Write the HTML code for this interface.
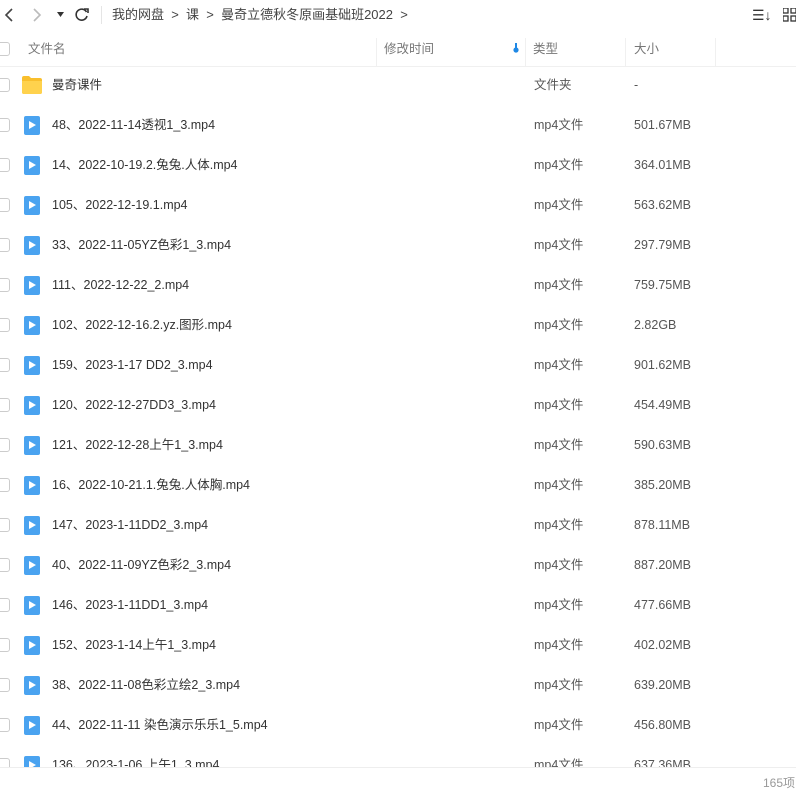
<!DOCTYPE html>
<html><head><meta charset="utf-8"><style>
*{margin:0;padding:0;box-sizing:border-box}
body{width:796px;height:794px;overflow:hidden;background:#fff;font-family:"Liberation Sans","Noto Sans CJK SC",sans-serif;font-size:12.5px;line-height:16px;color:#333;position:relative}
.a{position:absolute;white-space:nowrap}
.row{position:absolute;left:0;width:796px;height:40px}
.cb{position:absolute;left:-4px;top:13px;width:14px;height:14px;border:1px solid #ccc;border-radius:3px;background:#fff}
.ic{position:absolute;left:24px;top:11px;width:16px;height:19px;background:#4aa3f0;border-radius:2px}
.ic:after{content:"";position:absolute;left:5px;top:5px;border-left:7px solid #fff;border-top:4.5px solid transparent;border-bottom:4.5px solid transparent}
.nm,.tp,.sz{position:absolute;top:12px;height:16px;line-height:16px}
.nm{left:52px}
.tp{left:534px;color:#555}
.sz{left:634px;color:#555}
.hd{color:#777}
</style></head><body>
<svg class="a" style="left:2px;top:7px" width="14" height="16"><path d="M10 2L4 8l6 6" stroke="#444" stroke-width="1.6" fill="none"/></svg>
<svg class="a" style="left:30px;top:7px" width="14" height="16"><path d="M4 2l6 6-6 6" stroke="#bbb" stroke-width="1.6" fill="none"/></svg>
<svg class="a" style="left:57px;top:12px" width="8" height="6"><path d="M0 0h7L3.5 5z" fill="#333"/></svg>
<svg class="a" style="left:74px;top:7px" width="16" height="16"><path d="M12.5 5A5.5 5.5 0 1 0 13 9" stroke="#333" stroke-width="1.6" fill="none"/><path d="M10 2h4v4" stroke="#333" stroke-width="1.6" fill="none"/></svg>
<div class="a" style="left:101px;top:6px;width:1px;height:18px;background:#e5e5e5"></div>
<div class="a" style="left:112px;top:7px;font-size:13px;color:#444">我的网盘 &nbsp;&gt;&nbsp; 课 &nbsp;&gt;&nbsp; 曼奇立德秋冬原画基础班2022 &nbsp;&gt;</div>
<div class="a" style="left:752px;top:7px;font-size:14px;color:#333">☰↓</div>
<svg class="a" style="left:783px;top:8px" width="14" height="14"><rect x="0" y="0" width="5" height="5" fill="none" stroke="#333" stroke-width="1.3"/><rect x="8" y="0" width="5" height="5" fill="none" stroke="#333" stroke-width="1.3"/><rect x="0" y="8" width="5" height="5" fill="none" stroke="#333" stroke-width="1.3"/><rect x="8" y="8" width="5" height="5" fill="none" stroke="#333" stroke-width="1.3"/></svg>
<div class="a" style="left:0;top:31px;width:796px;height:36px;border-bottom:1px solid #f0f0f0"></div>
<div class="cb" style="top:42px"></div>
<div class="a hd" style="left:28px;top:41px">文件名</div>
<div class="a" style="left:376px;top:38px;width:1px;height:28px;background:#f0f0f0"></div>
<div class="a hd" style="left:384px;top:41px">修改时间</div>
<svg class="a" style="left:513px;top:43px" width="6" height="10"><rect x="2" y="0" width="2" height="5" fill="#1e88e5"/><circle cx="3" cy="7" r="2.6" fill="#1e88e5"/></svg>
<div class="a" style="left:525px;top:38px;width:1px;height:28px;background:#f0f0f0"></div>
<div class="a hd" style="left:533px;top:41px">类型</div>
<div class="a" style="left:625px;top:38px;width:1px;height:28px;background:#f0f0f0"></div>
<div class="a hd" style="left:634px;top:41px">大小</div>
<div class="a" style="left:715px;top:38px;width:1px;height:28px;background:#f0f0f0"></div>
<div class="row" style="top:65px"><div class="cb"></div>
<svg class="a" style="left:22px;top:11px" width="20" height="18"><path d="M0 2a2 2 0 0 1 2-2h5l2 2h9a2 2 0 0 1 2 2v12a2 2 0 0 1-2 2H2a2 2 0 0 1-2-2z" fill="#f9bf2d"/><path d="M0 5h20v11a2 2 0 0 1-2 2H2a2 2 0 0 1-2-2z" fill="#ffd24d"/></svg>
<div class="nm">曼奇课件</div><div class="tp">文件夹</div><div class="sz">-</div></div>
<div class="row" style="top:105px"><div class="cb"></div><div class="ic"></div><div class="nm">48、2022-11-14透视1_3.mp4</div><div class="tp">mp4文件</div><div class="sz">501.67MB</div></div>
<div class="row" style="top:145px"><div class="cb"></div><div class="ic"></div><div class="nm">14、2022-10-19.2.兔兔.人体.mp4</div><div class="tp">mp4文件</div><div class="sz">364.01MB</div></div>
<div class="row" style="top:185px"><div class="cb"></div><div class="ic"></div><div class="nm">105、2022-12-19.1.mp4</div><div class="tp">mp4文件</div><div class="sz">563.62MB</div></div>
<div class="row" style="top:225px"><div class="cb"></div><div class="ic"></div><div class="nm">33、2022-11-05YZ色彩1_3.mp4</div><div class="tp">mp4文件</div><div class="sz">297.79MB</div></div>
<div class="row" style="top:265px"><div class="cb"></div><div class="ic"></div><div class="nm">111、2022-12-22_2.mp4</div><div class="tp">mp4文件</div><div class="sz">759.75MB</div></div>
<div class="row" style="top:305px"><div class="cb"></div><div class="ic"></div><div class="nm">102、2022-12-16.2.yz.图形.mp4</div><div class="tp">mp4文件</div><div class="sz">2.82GB</div></div>
<div class="row" style="top:345px"><div class="cb"></div><div class="ic"></div><div class="nm">159、2023-1-17 DD2_3.mp4</div><div class="tp">mp4文件</div><div class="sz">901.62MB</div></div>
<div class="row" style="top:385px"><div class="cb"></div><div class="ic"></div><div class="nm">120、2022-12-27DD3_3.mp4</div><div class="tp">mp4文件</div><div class="sz">454.49MB</div></div>
<div class="row" style="top:425px"><div class="cb"></div><div class="ic"></div><div class="nm">121、2022-12-28上午1_3.mp4</div><div class="tp">mp4文件</div><div class="sz">590.63MB</div></div>
<div class="row" style="top:465px"><div class="cb"></div><div class="ic"></div><div class="nm">16、2022-10-21.1.兔兔.人体胸.mp4</div><div class="tp">mp4文件</div><div class="sz">385.20MB</div></div>
<div class="row" style="top:505px"><div class="cb"></div><div class="ic"></div><div class="nm">147、2023-1-11DD2_3.mp4</div><div class="tp">mp4文件</div><div class="sz">878.11MB</div></div>
<div class="row" style="top:545px"><div class="cb"></div><div class="ic"></div><div class="nm">40、2022-11-09YZ色彩2_3.mp4</div><div class="tp">mp4文件</div><div class="sz">887.20MB</div></div>
<div class="row" style="top:585px"><div class="cb"></div><div class="ic"></div><div class="nm">146、2023-1-11DD1_3.mp4</div><div class="tp">mp4文件</div><div class="sz">477.66MB</div></div>
<div class="row" style="top:625px"><div class="cb"></div><div class="ic"></div><div class="nm">152、2023-1-14上午1_3.mp4</div><div class="tp">mp4文件</div><div class="sz">402.02MB</div></div>
<div class="row" style="top:665px"><div class="cb"></div><div class="ic"></div><div class="nm">38、2022-11-08色彩立绘2_3.mp4</div><div class="tp">mp4文件</div><div class="sz">639.20MB</div></div>
<div class="row" style="top:705px"><div class="cb"></div><div class="ic"></div><div class="nm">44、2022-11-11 染色演示乐乐1_5.mp4</div><div class="tp">mp4文件</div><div class="sz">456.80MB</div></div>
<div class="row" style="top:745px"><div class="cb"></div><div class="ic"></div><div class="nm">136、2023-1-06 上午1_3.mp4</div><div class="tp">mp4文件</div><div class="sz">637.36MB</div></div>
<div class="a" style="left:0;top:767px;width:796px;height:27px;background:#fff;border-top:1px solid #eee"></div>
<div class="a" style="left:763px;top:775px;color:#999;font-size:12px">165项</div>
</body></html>
